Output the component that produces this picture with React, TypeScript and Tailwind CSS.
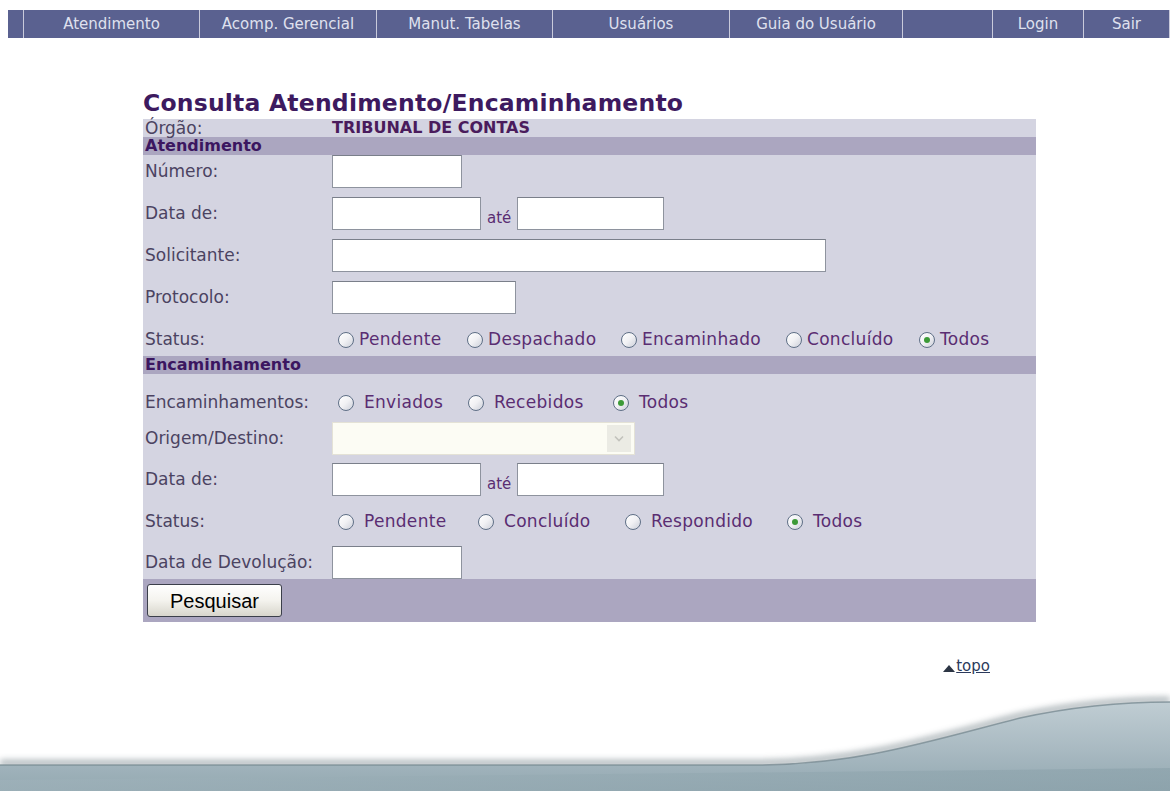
import React from 'react';

const menu = [
  { label: '', w: 'w-[16px]' },
  { label: 'Atendimento', w: 'w-[176px]' },
  { label: 'Acomp. Gerencial', w: 'w-[177px]' },
  { label: 'Manut. Tabelas', w: 'w-[176px]' },
  { label: 'Usuários', w: 'w-[177px]' },
  { label: 'Guia do Usuário', w: 'w-[173px]' },
  { label: '', w: 'w-[90px]' },
  { label: 'Login', w: 'w-[91px]' },
  { label: 'Sair', w: 'flex-1' },
];

type Opt = [string, string, boolean];

const Radio = ({ checked = false }: { checked?: boolean }) => (
  <span className="inline-flex h-[16px] w-[16px] shrink-0 items-center justify-center rounded-full border border-[#5f6f86] bg-gradient-to-br from-[#ffffff] via-[#f1f1f4] to-[#cdd0da]">
    {checked && <span className="h-[6px] w-[6px] rounded-full bg-[#3c9a37]" />}
  </span>
);

const RadioGroup = ({ opts, gap }: { opts: Opt[]; gap: string }) => (
  <span className="ml-[6px] flex tracking-[0.3px] text-[#5a2d72]">
    {opts.map(([t, w, c]) => (
      <span key={t} className={`flex items-center ${w}`}>
        <Radio checked={c} />
        <span className={gap}>{t}</span>
      </span>
    ))}
  </span>
);

const Input = ({ w }: { w: string }) => (
  <span className={`block h-[33px] ${w} border border-[#8e939e] border-t-[#7a7f8a] bg-white`} />
);

const Label = ({ children }: { children: React.ReactNode }) => (
  <span className="w-[189px] shrink-0 pl-[2px] text-[#4b4361]">{children}</span>
);

const SectionHeader = ({ children }: { children: React.ReactNode }) => (
  <div className="flex h-[18px] items-center bg-[#aba6c0] pl-[2px] text-[16px] font-bold leading-none text-[#3b1660]">
    {children}
  </div>
);

const DateRange = () => (
  <>
    <Input w="w-[149px]" />
    <span className="mx-[6px] mt-[10px] text-[15px] text-[#5a2d72]">até</span>
    <Input w="w-[147px]" />
  </>
);

export default function App() {
  return (
    <div className="relative min-h-[791px] overflow-hidden bg-white font-['DejaVu_Sans',Verdana,sans-serif]">
      {/* top menu */}
      <nav className="ml-[8px] mt-[10px] flex h-[28px] bg-[#5a6190] text-[15px] text-[#dfe0ee]">
        {menu.map((m, i) => (
          <div key={i} className={`${m.w} flex items-center justify-center border-r border-[#c9cadb]`}>
            {m.label}
          </div>
        ))}
      </nav>

      <main className="ml-[143px] w-[893px]">
        <h1 className="mt-[51px] text-[23.5px] font-bold leading-[28px] tracking-[0.2px] text-[#3d1a5f]">
          Consulta Atendimento/Encaminhamento
        </h1>

        <form className="mt-[2px] bg-[#d4d4e1] text-[17px] leading-none">
          <div className="flex h-[18px] items-center">
            <Label>Órgão:</Label>
            <span className="text-[16px] font-bold text-[#4a1b5c]">TRIBUNAL DE CONTAS</span>
          </div>

          <SectionHeader>Atendimento</SectionHeader>

          <div className="flex h-[33px] items-center">
            <Label>Número:</Label>
            <Input w="w-[130px]" />
          </div>
          <div className="mt-[9px] flex h-[33px] items-center">
            <Label>Data de:</Label>
            <DateRange />
          </div>
          <div className="mt-[9px] flex h-[33px] items-center">
            <Label>Solicitante:</Label>
            <Input w="w-[494px]" />
          </div>
          <div className="mt-[9px] flex h-[33px] items-center">
            <Label>Protocolo:</Label>
            <Input w="w-[184px]" />
          </div>
          <div className="mt-[9px] flex h-[33px] items-center">
            <Label>Status:</Label>
            <RadioGroup
              gap="ml-[5px]"
              opts={[
                ['Pendente', 'w-[129px]', false],
                ['Despachado', 'w-[154px]', false],
                ['Encaminhado', 'w-[165px]', false],
                ['Concluído', 'w-[133px]', false],
                ['Todos', '', true],
              ]}
            />
          </div>

          <SectionHeader>Encaminhamento</SectionHeader>

          <div className="mt-[12px] flex h-[33px] items-center">
            <Label>Encaminhamentos:</Label>
            <RadioGroup
              gap="ml-[10px]"
              opts={[
                ['Enviados', 'w-[130px]', false],
                ['Recebidos', 'w-[145px]', false],
                ['Todos', '', true],
              ]}
            />
          </div>
          <div className="mt-[3px] flex h-[33px] items-center">
            <Label>Origem/Destino:</Label>
            <span className="flex h-[33px] w-[303px] items-center justify-end border border-[#e4e2d6] bg-[#fcfcf4] pr-[3px]">
              <span className="flex h-[27px] w-[24px] items-center justify-center bg-[#ebebe4]">
                <svg width="10" height="7" viewBox="0 0 10 7">
                  <path d="M1 1.5 L5 5.5 L9 1.5" fill="none" stroke="#c2c2bc" strokeWidth="1.6" />
                </svg>
              </span>
            </span>
          </div>
          <div className="mt-[8px] flex h-[33px] items-center">
            <Label>Data de:</Label>
            <DateRange />
          </div>
          <div className="mt-[9px] flex h-[33px] items-center">
            <Label>Status:</Label>
            <RadioGroup
              gap="ml-[10px]"
              opts={[
                ['Pendente', 'w-[140px]', false],
                ['Concluído', 'w-[147px]', false],
                ['Respondido', 'w-[162px]', false],
                ['Todos', '', true],
              ]}
            />
          </div>
          <div className="mt-[8px] flex h-[33px] items-center">
            <Label>Data de Devolução:</Label>
            <Input w="w-[130px]" />
          </div>

          <div className="flex h-[43px] items-center bg-[#aba6c0] pl-[4px]">
            <button
              type="button"
              className="h-[33px] w-[135px] rounded-[3px] border border-[#3b3f4a] bg-gradient-to-b from-[#ffffff] via-[#f4f3ee] to-[#d8d6cc] font-['Liberation_Sans',Arial,sans-serif] text-[20px] text-black"
            >
              Pesquisar
            </button>
          </div>
        </form>

        <div className="mt-[33px] flex justify-end pr-[46px] text-[15px]">
          <a href="#" className="flex items-end text-[#2c3a5c]">
            <svg width="12" height="7" viewBox="0 0 12 7" className="mb-[6px] mr-[1px]">
              <path d="M0 7 L6 0 L12 7 Z" fill="#2c3544" />
            </svg>
            <span className="underline">topo</span>
          </a>
        </div>
      </main>

      {/* footer wave */}
      <svg
        className="absolute bottom-0 left-0"
        width="1170"
        height="110"
        viewBox="0 0 1170 110"
        preserveAspectRatio="none"
      >
        <defs>
          <linearGradient id="band" x1="0" y1="0" x2="0" y2="1">
            <stop offset="0" stopColor="#c0cdd3" />
            <stop offset="0.55" stopColor="#a8b9c1" />
            <stop offset="1" stopColor="#93a8b1" />
          </linearGradient>
          <linearGradient id="low" x1="0" y1="0" x2="1" y2="0">
            <stop offset="0" stopColor="#9fb2ba" />
            <stop offset="1" stopColor="#89a0a9" />
          </linearGradient>
          <filter id="soft" x="-5%" y="-50%" width="110%" height="200%">
            <feGaussianBlur stdDeviation="3" />
          </filter>
        </defs>
        <path
          d="M0 82 L760 82 C 860 81 930 58 1020 35 C 1080 22 1130 19 1170 19"
          fill="none"
          stroke="#56686f"
          strokeWidth="6"
          opacity="0.5"
          filter="url(#soft)"
        />
        <path
          d="M0 84 L760 84 C 860 83 930 60 1020 37 C 1080 24 1130 21 1170 21 L1170 110 L0 110 Z"
          fill="url(#band)"
        />
        <path d="M0 99 L900 90 L1170 87 L1170 110 L0 110 Z" fill="url(#low)" opacity="0.6" />
        <path
          d="M0 84 L760 84 C 860 83 930 60 1020 37 C 1080 24 1130 21 1170 21"
          fill="none"
          stroke="#74878f"
          strokeWidth="1.4"
          opacity="0.75"
        />
      </svg>
    </div>
  );
}
